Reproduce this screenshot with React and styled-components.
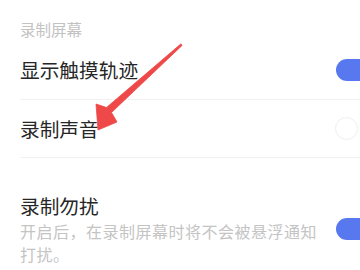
import React from "react";
import styled, { createGlobalStyle } from "styled-components";

const Global = createGlobalStyle`
  html, body { margin: 0; padding: 0; background: #fff; overflow: hidden; }
  body { font-family: "Noto Sans CJK SC", "Noto Sans", sans-serif; }
`;

const Page = styled.div`
  position: relative;
  width: 360px;
  height: 270px;
  overflow: hidden;
  background: #fff;
`;

const SectionTitle = styled.div`
  padding: 19px 0 0 20px;
  height: 21px;
  font-size: 15.5px;
  line-height: 20px;
  color: #c2c2c2;
`;

const Row = styled.div`
  display: flex;
  align-items: ${(p) => (p.$top ? "flex-start" : "center")};
  justify-content: space-between;
  margin-left: 20px;
  height: ${(p) => p.$h}px;
  padding-top: ${(p) => p.$pt || 0}px;
  box-sizing: border-box;
  border-bottom: ${(p) => (p.$divider ? "1px solid #f1f1f1" : "none")};
`;

const Texts = styled.div`
  display: flex;
  flex-direction: column;
`;

const Label = styled.div`
  font-size: 19.7px;
  line-height: 26px;
  color: #262626;
`;

const Desc = styled.div`
  margin-top: 1px;
  max-width: 302px;
  font-size: 16px;
  letter-spacing: 0.5px;
  line-height: 23px;
  color: #c4c4c4;
`;

const Toggle = styled.div`
  flex: none;
  width: 46px;
  height: ${(p) => (p.$on ? 22 : 23)}px;
  margin-right: -22px;
  margin-top: ${(p) => p.$mt || 0}px;
  border-radius: 12px;
  box-sizing: border-box;
  background: ${(p) => (p.$on ? "#5878ef" : "#fff")};
  border: ${(p) => (p.$on ? "none" : "1.5px solid #efefef")};
  ${(p) => !p.$on && "width: 23px; margin-right: 2px; border-radius: 50%;"}
`;

const ArrowSvg = styled.svg`
  position: absolute;
  left: 0;
  top: 0;
  pointer-events: none;
`;

export default function App() {
  return (
    <Page>
      <Global />
      <SectionTitle>录制屏幕</SectionTitle>
      <Row $h={60} $divider>
        <Label>显示触摸轨迹</Label>
        <Toggle $on />
      </Row>
      <Row $h={58} $divider>
        <Label>录制声音</Label>
        <Toggle />
      </Row>
      <Row $h={112} $top $pt={35}>
        <Texts>
          <Label>录制勿扰</Label>
          <Desc>开启后，在录制屏幕时将不会被悬浮通知打扰。</Desc>
        </Texts>
        <Toggle $on $mt={25} />
      </Row>
      <ArrowSvg width="360" height="270" viewBox="0 0 360 270">
        <polygon
          points="182,45.5 111.5,112.5 117,122 98,130 96,104 106.5,107.5 181,43.8"
          fill="#ef4848"
          stroke="#ef4848"
          strokeWidth="0.8"
          strokeLinejoin="round"
        />
      </ArrowSvg>
    </Page>
  );
}
